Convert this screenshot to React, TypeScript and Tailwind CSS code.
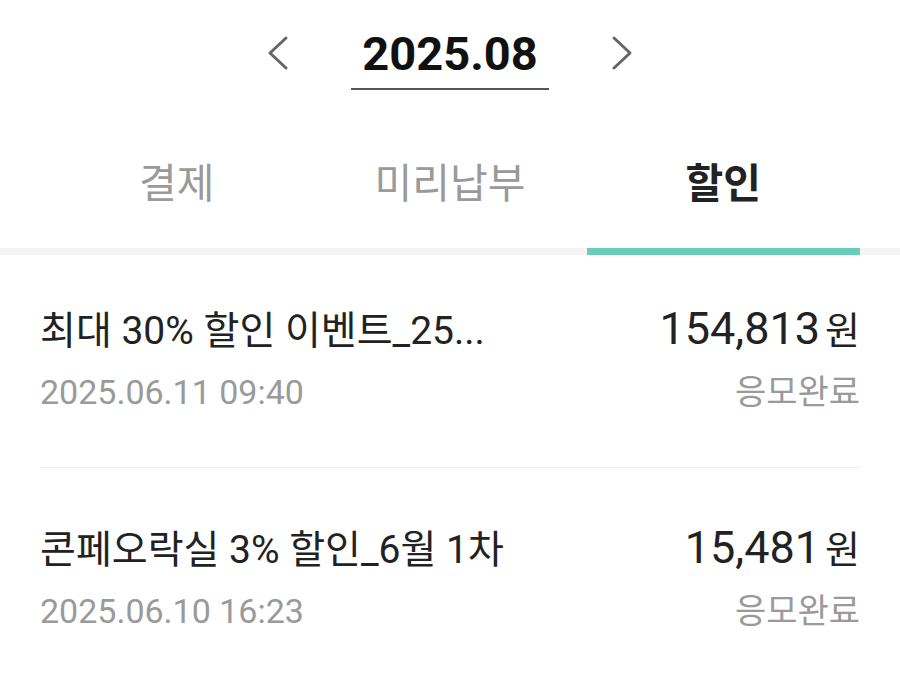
import { useState } from 'react';

interface DiscountItem {
  title: string;
  date: string;
  amount: string;
  status: string;
}

const items: DiscountItem[] = [
  { title: '최대 30% 할인 이벤트_25...', date: '2025.06.11 09:40', amount: '154,813', status: '응모완료' },
  { title: '콘페오락실 3% 할인_6월 1차', date: '2025.06.10 16:23', amount: '15,481', status: '응모완료' },
];

const tabs = ['결제', '미리납부', '할인'];

function Chevron({ dir }: { dir: 'left' | 'right' }) {
  return (
    <svg width="24" height="40" viewBox="0 0 24 40" fill="none" className="mt-[3px] shrink-0">
      <polyline
        points={dir === 'left' ? '20,5 4,20 20,35' : '4,5 20,20 4,35'}
        stroke="#666666"
        strokeWidth="3"
        strokeLinecap="round"
        strokeLinejoin="round"
      />
    </svg>
  );
}

export default function App() {
  const [activeTab, setActiveTab] = useState(2);

  return (
    <div className="w-[900px] min-h-[687px] bg-white font-[Roboto,'Noto_Sans_CJK_KR',sans-serif]">
      {/* Month selector */}
      <div className="flex items-start justify-center gap-[61px] pt-[30px]">
        <Chevron dir="left" />
        <div className="border-b-2 border-[#555555] px-[11px] pb-[11px] text-[47px] font-bold leading-none text-[#111111]">
          2025.08
        </div>
        <Chevron dir="right" />
      </div>

      {/* Tabs */}
      <div className="border-b-[7px] border-[#f4f4f4]">
        <div className="grid grid-cols-3 px-[40px]">
          {tabs.map((tab, i) => (
            <button
              key={tab}
              onClick={() => setActiveTab(i)}
              className={`-mb-[7px] border-b-[7px] pt-[74px] pb-[43px] text-[41px] leading-none ${
                activeTab === i
                  ? 'border-[#69cdb9] font-bold text-[#222222]'
                  : 'border-transparent text-[#9a9a9a]'
              }`}
            >
              {tab}
            </button>
          ))}
        </div>
      </div>

      {/* List */}
      <div className="px-[40px]">
        {items.map((item, i) => (
          <div
            key={item.date}
            className={`border-b border-[#eeeeee] pb-[58px] last:border-b-0 ${i === 0 ? 'pt-[51px]' : 'pt-[57px]'}`}
          >
            <div className="flex items-baseline justify-between">
              <span className="text-[39px] leading-none text-[#222222]">{item.title}</span>
              <span className="leading-none text-[#222222]">
                <span className="text-[45px]">{item.amount}</span>
                <span className="ml-[5px] text-[38px]">원</span>
              </span>
            </div>
            <div className="mt-[24px] flex items-baseline justify-between">
              <span className="text-[34px] leading-none text-[#9a9a9a]">{item.date}</span>
              <span className="text-[34px] leading-none text-[#9a9a9a]">{item.status}</span>
            </div>
          </div>
        ))}
      </div>
    </div>
  );
}
